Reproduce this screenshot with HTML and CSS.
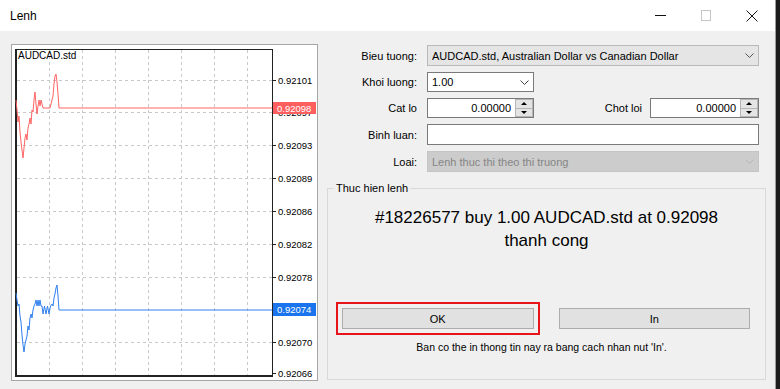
FILE: index.html
```html
<!DOCTYPE html>
<html lang="vi">
<head>
  <meta charset="UTF-8">
  <title>Lenh</title>
  <link rel="stylesheet" href="styles.css">
</head>
<body>
<div class="window">
  <div class="titlebar">
    <span class="title">Lenh</span>
    <div class="win-buttons">
      <span class="wb"><svg width="11" height="11" viewBox="0 0 11 11"><line x1="0" y1="5.5" x2="11" y2="5.5" stroke="#111" stroke-width="1"/></svg></span>
      <span class="wb"><svg width="11" height="11" viewBox="0 0 11 11"><rect x="0.5" y="0.5" width="9" height="10" fill="none" stroke="#c4c4c4" stroke-width="1"/></svg></span>
      <span class="wb"><svg width="12" height="12" viewBox="0 0 12 12"><path d="M0.5 0.5 L11.5 11.5 M11.5 0.5 L0.5 11.5" stroke="#111" stroke-width="1"/></svg></span>
    </div>
  </div>

  <div class="content">
    <div class="chart-box">
      <svg class="chart" width="305" height="335" viewBox="12 45 305 335">
        <!-- luoi -->
        <g stroke="#c8c8c8" stroke-width="1" stroke-dasharray="3 3">
          <line x1="17" y1="80.5" x2="272" y2="80.5"/>
          <line x1="17" y1="112.5" x2="272" y2="112.5"/>
          <line x1="17" y1="145.5" x2="272" y2="145.5"/>
          <line x1="17" y1="178.5" x2="272" y2="178.5"/>
          <line x1="17" y1="211.5" x2="272" y2="211.5"/>
          <line x1="17" y1="244.5" x2="272" y2="244.5"/>
          <line x1="17" y1="277.5" x2="272" y2="277.5"/>
          <line x1="17" y1="342.5" x2="272" y2="342.5"/>
          <line x1="49.5" y1="50" x2="49.5" y2="375"/>
          <line x1="82.5" y1="50" x2="82.5" y2="375"/>
          <line x1="115.5" y1="50" x2="115.5" y2="375"/>
          <line x1="148.5" y1="50" x2="148.5" y2="375"/>
          <line x1="181.5" y1="50" x2="181.5" y2="375"/>
          <line x1="214.5" y1="50" x2="214.5" y2="375"/>
          <line x1="247.5" y1="50" x2="247.5" y2="375"/>
        </g>

        <!-- khung -->
        <g stroke="#222" fill="none">
          <line x1="15" y1="49.5" x2="273" y2="49.5" stroke-width="1"/>
          <line x1="272.5" y1="49" x2="272.5" y2="377" stroke-width="1"/>
          <line x1="16" y1="49" x2="16" y2="377" stroke-width="2"/>
          <line x1="15" y1="376" x2="273" y2="376" stroke-width="2"/>
        </g>

        <!-- vach gia -->
        <g stroke="#222" stroke-width="1">
          <line x1="273" y1="80.5" x2="276" y2="80.5"/>
          <line x1="273" y1="145.5" x2="276" y2="145.5"/>
          <line x1="273" y1="178.5" x2="276" y2="178.5"/>
          <line x1="273" y1="211.5" x2="276" y2="211.5"/>
          <line x1="273" y1="244.5" x2="276" y2="244.5"/>
          <line x1="273" y1="277.5" x2="276" y2="277.5"/>
          <line x1="273" y1="342.5" x2="276" y2="342.5"/>
          <line x1="273" y1="373.5" x2="276" y2="373.5"/>
        </g>

        <g class="axis-label">
          <text x="278" y="80">0.92101</text>
          <text x="278" y="112">0.92097</text>
          <text x="278" y="145">0.92093</text>
          <text x="278" y="178">0.92089</text>
          <text x="278" y="211">0.92086</text>
          <text x="278" y="244">0.92082</text>
          <text x="278" y="277">0.92078</text>
          <text x="278" y="342">0.92070</text>
          <text x="278" y="373">0.92066</text>
        </g>

        <text class="symbol" x="18" y="55">AUDCAD.std</text>

        <polyline fill="none" stroke="#ff6464" stroke-width="1"
          points="16,100 17,110 18,122 19,116 20,132 21,142 22,150 23,158 24,148 25,138 26,134 27,140 28,128 29,124 30,118 31,124 32,110 33,112 34,100 35,92 36,104 37,114 38,106 39,100 40,106 41,100 42,104 43,108 50,108 51,104 52,100 53,96 54,84 55,76 56,74 57,82 58,94 59,108 272,108"/>
        <polyline fill="none" stroke="#2f7ff0" stroke-width="1"
          points="16,293 17,300 18,306 19,304 20,316 21,322 22,335 23,345 24,352 25,344 26,340 27,336 28,326 29,330 30,318 31,314 32,318 33,310 34,306 35,304 36,300 37,306 38,300 39,306 40,300 41,306 42,306 43,314 44.5,306 46,314 47.5,306 49,314 50.5,306 52,304 53,306 54,298 55,294 56,288 57,285 58,296 59,310 272,310"/>

        <rect x="273" y="102" width="43" height="12" fill="#ff5e5e"/>
        <text class="tag" x="277" y="108">0.92098</text>
        <rect x="273" y="303" width="43" height="13" fill="#1a74ee"/>
        <text class="tag" x="277" y="309.5">0.92074</text>
      </svg>
    </div>

    <div class="order-panel">
      <div class="form">
        <label>Bieu tuong:</label>
        <div class="combo combo-readonly">
          <span class="combo-text">AUDCAD.std, Australian Dollar vs Canadian Dollar</span>
          <svg class="chevron" width="9" height="5" viewBox="0 0 9 5"><polyline points="0.5,0.5 4.5,4.5 8.5,0.5" fill="none" stroke="#555" stroke-width="1"/></svg>
        </div>

        <label>Khoi luong:</label>
        <div class="combo combo-small">
          <span class="combo-text">1.00</span>
          <svg class="chevron" width="9" height="5" viewBox="0 0 9 5"><polyline points="0.5,0.5 4.5,4.5 8.5,0.5" fill="none" stroke="#444" stroke-width="1"/></svg>
        </div>

        <label>Cat lo</label>
        <div class="row-pair">
          <div class="spin">
            <span class="spin-value">0.00000</span>
            <span class="spin-btns"><span class="up"></span><span class="down"></span></span>
          </div>
          <label class="pair-label">Chot loi</label>
          <div class="spin spin-wide">
            <span class="spin-value">0.00000</span>
            <span class="spin-btns"><span class="up"></span><span class="down"></span></span>
          </div>
        </div>

        <label>Binh luan:</label>
        <div class="textbox"></div>

        <label>Loai:</label>
        <div class="combo combo-disabled">
          <span class="combo-text">Lenh thuc thi theo thi truong</span>
          <svg class="chevron" width="9" height="5" viewBox="0 0 9 5"><polyline points="0.5,0.5 4.5,4.5 8.5,0.5" fill="none" stroke="#b4b4b4" stroke-width="1"/></svg>
        </div>
      </div>

      <fieldset class="result">
        <legend>Thuc hien lenh</legend>
        <p class="result-msg">#18226577 buy 1.00 AUDCAD.std at 0.92098<br>thanh cong</p>
        <div class="buttons">
          <button class="btn btn-ok">OK</button>
          <button class="btn">In</button>
        </div>
        <p class="hint">Ban co the in thong tin nay ra bang cach nhan nut 'In'.</p>
      </fieldset>
    </div>
  </div>
</div>
</body>
</html>
```

FILE: styles.css
```css
body {
  margin: 0;
  width: 780px;
  height: 389px;
  overflow: hidden;
  background-color: #1c1c1c;
  font-family: "Liberation Sans", Arial, sans-serif;
  color: #000;
}
.window {
  width: 776px;
  height: 389px;
  background-color: #f0f0f0;
  border-right: 1px solid #9c9c9c;
  box-sizing: border-box;
}
.titlebar {
  height: 31px;
  background-color: #fff;
  display: flex;
  align-items: center;
}
.title {
  padding-left: 10px;
  font-size: 12px;
  flex: 1;
}
.win-buttons {
  display: flex;
  height: 31px;
}
.wb {
  width: 46px;
  height: 31px;
  display: flex;
  align-items: center;
  justify-content: center;
}
.wb svg {
  display: block;
}

.content {
  display: flex;
}
.chart-box {
  margin: 13px 0 0 11px;
  width: 305px;
  height: 335px;
  border: 1px solid #a6a6a6;
  background-color: #fff;
}
.chart {
  display: block;
}
.axis-label text {
  font-size: 9.5px;
  fill: #000;
  dominant-baseline: central;
}
.symbol {
  font-size: 10px;
  fill: #000;
  dominant-baseline: central;
}
.tag {
  font-size: 9.5px;
  fill: #fff;
  dominant-baseline: central;
}

.order-panel {
  margin: 14px 0 0 9px;
  width: 439px;
}
.form {
  display: grid;
  grid-template-columns: 90px 332px;
  grid-template-rows: 21px 20px 20px 21px 21px;
  column-gap: 10px;
  row-gap: 6px;
  font-size: 11px;
}
.form label {
  display: flex;
  align-items: center;
  justify-content: flex-end;
}
.combo {
  display: flex;
  align-items: center;
  border: 1px solid #7a7a7a;
  background-color: #fff;
  padding: 0 4px 0 4px;
  box-sizing: border-box;
}
.combo-text {
  flex: 1;
}
.chevron {
  display: block;
}
.combo-readonly {
  background-color: #e5e5e5;
  border-color: #b9b9b9;
}
.combo-small {
  width: 107px;
}
.combo-disabled {
  background-color: #cccccc;
  border-color: #c4c4c4;
  color: #858585;
}
.row-pair {
  display: flex;
}
.pair-label {
  flex: 1;
  padding-right: 8px;
}
.spin {
  width: 107px;
  display: flex;
  border: 1px solid #7a7a7a;
  background-color: #fff;
  box-sizing: border-box;
}
.spin-wide {
  width: 109px;
}
.spin-value {
  flex: 1;
  display: flex;
  align-items: center;
  justify-content: flex-end;
  padding-right: 4px;
}
.spin-btns {
  width: 16px;
  display: flex;
  flex-direction: column;
  border: 1px solid #b5b5b5;
}
.spin-btns span {
  flex: 1;
  background-color: #e4e4e4;
  display: flex;
  align-items: center;
  justify-content: center;
}
.spin-btns .up {
  border-bottom: 1px solid #b5b5b5;
}
.spin-btns .up::after {
  content: "";
  border-left: 3px solid transparent;
  border-right: 3px solid transparent;
  border-bottom: 3px solid #000;
}
.spin-btns .down::after {
  content: "";
  border-left: 3px solid transparent;
  border-right: 3px solid transparent;
  border-top: 3px solid #000;
}
.textbox {
  border: 1px solid #7a7a7a;
  background-color: #fff;
}

.result {
  margin: 9px 0 0 0;
  padding: 0;
  border: 1px solid #d9d9d9;
  min-width: 0;
}
.result legend {
  font-size: 11px;
  line-height: 14px;
  padding: 0 2px;
  margin-left: 6px;
}
.result-msg {
  margin: 0;
  padding-top: 11px;
  font-size: 17px;
  line-height: 23px;
  text-align: center;
}
.buttons {
  display: grid;
  grid-template-columns: 1fr 1fr;
  column-gap: 25px;
  padding: 0 15px 0 14px;
  margin-top: 56px;
}
.btn {
  height: 21px;
  font-family: "Liberation Sans", Arial, sans-serif;
  font-size: 11px;
  color: #000;
  background-color: #e1e1e1;
  border: 1px solid #adadad;
  padding: 0;
}
.btn-ok {
  outline: 2px solid #e8141b;
  outline-offset: 4px;
}
.hint {
  margin: 11px 0 0 0;
  padding: 0 10px 25px 0;
  font-size: 10.5px;
  line-height: 14px;
  text-align: center;
}
```
